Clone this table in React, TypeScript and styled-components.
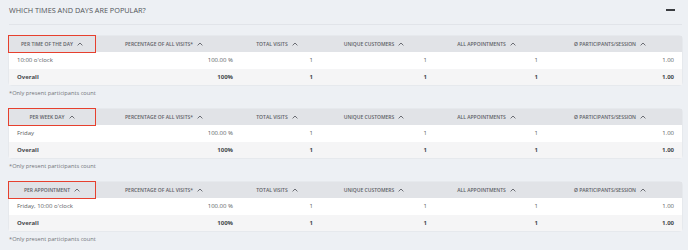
import styled, { createGlobalStyle } from "styled-components";

type Row = { label: string; share: string; visits: string; customers: string; appointments: string; avg: string };

type Block = { title: string; rows: Row[] };

const columns = [
  "PERCENTAGE OF ALL VISITS*",
  "TOTAL VISITS",
  "UNIQUE CUSTOMERS",
  "ALL APPOINTMENTS",
  "Ø PARTICIPANTS/SESSION",
];

const blocks: Block[] = [
  {
    title: "PER TIME OF THE DAY",
    rows: [{ label: "10:00 o'clock", share: "100.00 %", visits: "1", customers: "1", appointments: "1", avg: "1.00" }],
  },
  {
    title: "PER WEEK DAY",
    rows: [{ label: "Friday", share: "100.00 %", visits: "1", customers: "1", appointments: "1", avg: "1.00" }],
  },
  {
    title: "PER APPOINTMENT",
    rows: [{ label: "Friday, 10:00 o'clock", share: "100.00 %", visits: "1", customers: "1", appointments: "1", avg: "1.00" }],
  },
];

const overall: Row = { label: "Overall", share: "100%", visits: "1", customers: "1", appointments: "1", avg: "1.00" };

const GlobalStyle = createGlobalStyle`
  body {
    margin: 0;
    background: #edf0f4;
    font-family: "Open Sans", "Noto Sans", sans-serif;
    color: #555;
  }
`;

const SortArrow = () => (
  <svg width="6" height="4" viewBox="0 0 6 4">
    <polyline points="0.6,3.4 3,1 5.4,3.4" fill="none" stroke="currentColor" strokeWidth="0.9" />
  </svg>
);

const StatsTable = ({ block }: { block: Block }) => {
  const allRows = [...block.rows, overall];
  return (
    <Section>
      <Table>
        <HeadCell $marked>
          {block.title}
          <SortArrow />
        </HeadCell>
        {columns.map((c) => (
          <HeadCell key={c}>
            {c}
            <SortArrow />
          </HeadCell>
        ))}
        {allRows.map((r, i) => {
          const total = i === allRows.length - 1;
          return [r.label, r.share, r.visits, r.customers, r.appointments, r.avg].map((v, j) => (
            <Cell key={`${i}-${j}`} $total={total} $label={j === 0}>
              {v}
            </Cell>
          ));
        })}
      </Table>
      <Footnote>*Only present participants count</Footnote>
    </Section>
  );
};

const App = () => {
  return (
    <Wrapper>
      <GlobalStyle />
      <Header>
        <h2>WHICH TIMES AND DAYS ARE POPULAR?</h2>
        <Collapse aria-label="collapse" />
      </Header>
      {blocks.map((b) => (
        <StatsTable block={b} key={b.title} />
      ))}
    </Wrapper>
  );
};

const Wrapper = styled.div`
  padding: 0 6px 0 9px;
  width: 688px;
  box-sizing: border-box;
`;

const Header = styled.div`
  display: flex;
  align-items: flex-start;
  justify-content: space-between;
  height: 25px;
  border-bottom: 1px solid #e1e4e9;
  margin-bottom: 11px;
  box-sizing: border-box;
  h2 {
    margin: 0;
    padding-top: 5px;
    line-height: 10px;
    font-size: 7.3px;
    font-weight: 400;
    color: #505358;
  }
`;

const Collapse = styled.span`
  display: block;
  width: 9px;
  height: 1.5px;
  background: #3a3c40;
  margin-right: 7px;
  margin-top: 9px;
`;

const Section = styled.div`
  margin-bottom: 8px;
`;

const Table = styled.div`
  display: grid;
  grid-template-columns: 86px 146px 80px 114px 111px 1fr;
  grid-auto-rows: 16.5px;
  grid-template-rows: 16px;
  border-radius: 3px;
  box-shadow: 0 0 0 0.5px #dfe2e6;
  background: #fff;
`;

const HeadCell = styled.div<{ $marked?: boolean }>`
  display: flex;
  align-items: center;
  justify-content: center;
  gap: 4px;
  background: #e1e3e7;
  font-size: 5px;
  font-weight: 600;
  color: #5d6066;
  padding-right: ${(p) => (p.$marked ? "0" : "8px")};
  white-space: nowrap;
  outline: ${(p) => (p.$marked ? "1.6px solid #e6402e" : "none")};
  outline-offset: -0.6px;
  position: relative;
  z-index: ${(p) => (p.$marked ? 1 : 0)};
  svg {
    margin-top: -1px;
  }
`;

const Cell = styled.div<{ $total: boolean; $label: boolean }>`
  display: flex;
  align-items: center;
  justify-content: ${(p) => (p.$label ? "flex-start" : "flex-end")};
  padding: 0 8px;
  font-size: 6px;
  font-weight: ${(p) => (p.$total ? 700 : 400)};
  color: ${(p) => (p.$total ? "#45484c" : "#5a5d61")};
  background: ${(p) => (p.$total ? "#f5f5f6" : "#fff")};
  white-space: nowrap;
`;

const Footnote = styled.div`
  height: 16px;
  line-height: 16px;
  font-size: 5.7px;
  color: #72757a;
`;

export default App;
